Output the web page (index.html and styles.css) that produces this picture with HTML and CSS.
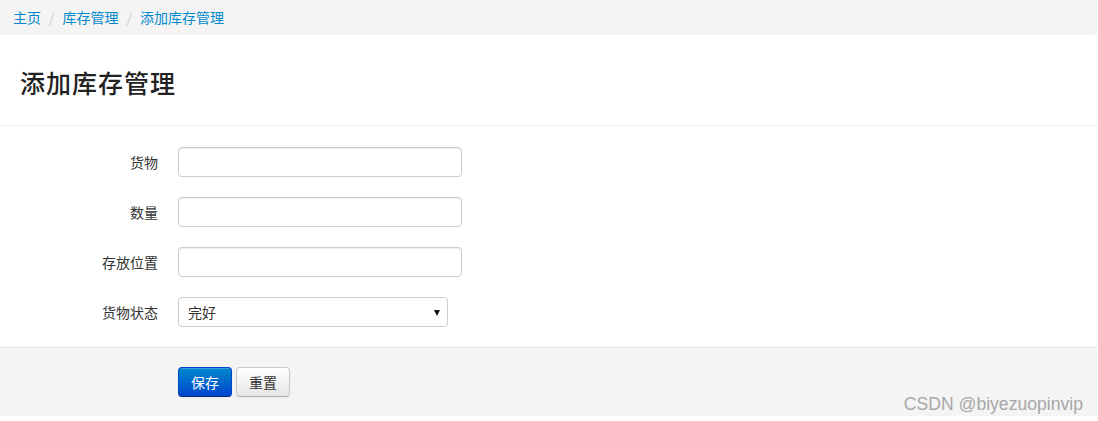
FILE: index.html
```html
<!DOCTYPE html>
<html lang="zh-CN">
<head>
  <meta charset="UTF-8" />
  <title>添加库存管理</title>
  <link rel="stylesheet" href="styles.css">
</head>
<body>
  <div class="page">
    <ul class="breadcrumb">
      <li><a href="#">主页</a><span class="divider">/</span></li>
      <li><a href="#">库存管理</a><span class="divider">/</span></li>
      <li><a href="#">添加库存管理</a></li>
    </ul>

    <div class="page-header">
      <h3>添加库存管理</h3>
    </div>

    <form class="form-horizontal">
      <div class="control-group">
        <label class="control-label">货物</label>
        <div class="controls"><input type="text" class="field" /></div>
      </div>
      <div class="control-group">
        <label class="control-label">数量</label>
        <div class="controls"><input type="text" class="field" /></div>
      </div>
      <div class="control-group">
        <label class="control-label">存放位置</label>
        <div class="controls"><input type="text" class="field" /></div>
      </div>
      <div class="control-group">
        <label class="control-label">货物状态</label>
        <div class="controls">
          <span class="select-wrap">
            <select class="field-select">
              <option>完好</option>
              <option>损坏</option>
            </select>
          </span>
        </div>
      </div>

      <div class="form-actions">
        <button type="button" class="btn btn-primary">保存</button>
        <button type="reset" class="btn">重置</button>
      </div>
    </form>

    <div class="watermark">CSDN @biyezuopinvip</div>
  </div>
</body>
</html>
```

FILE: styles.css
```css
body {
  margin: 0;
  font-family: "Noto Sans CJK SC", "Liberation Sans", sans-serif;
  font-size: 14px;
  color: #333;
  background: #fff;
}

.page {
  position: relative;
  width: 1097px;
}

.breadcrumb {
  list-style: none;
  margin: 0;
  padding: 7px 13px 8px;
  height: 20px;
  line-height: 20px;
  background: #f4f4f4;
  border-radius: 0 0 4px 0;
  display: flex;
}

.breadcrumb a {
  color: #0088cc;
  text-decoration: none;
}

.breadcrumb .divider {
  color: #ccc;
  padding: 0 8px;
}

.page-header {
  height: 90px;
  border-bottom: 1px solid #eee;
  display: flex;
  align-items: center;
  padding-left: 20px;
}

.page-header h3 {
  margin: 4px 0 0;
  font-size: 25px;
  font-weight: 500;
  color: #222;
  letter-spacing: 1px;
}

.form-horizontal {
  padding-top: 21px;
}

.control-group {
  display: flex;
  align-items: center;
  margin-bottom: 20px;
}

.control-label {
  width: 158px;
  text-align: right;
  margin-right: 20px;
  line-height: 30px;
}

.field {
  box-sizing: border-box;
  width: 284px;
  height: 30px;
  border: 1px solid #ccc;
  border-radius: 4px;
  box-shadow: inset 0 1px 1px rgba(0,0,0,0.075);
  padding: 4px 8px;
  font-size: 14px;
  display: block;
}

.select-wrap {
  position: relative;
  display: block;
}

.select-wrap::after {
  content: "";
  position: absolute;
  right: 8px;
  top: 13px;
  border-left: 3px solid transparent;
  border-right: 3px solid transparent;
  border-top: 6px solid #111;
}

.field-select {
  appearance: none;
  -webkit-appearance: none;
  box-sizing: border-box;
  width: 270px;
  height: 30px;
  border: 1px solid #ccc;
  border-radius: 4px;
  background: #fff;
  padding: 0 9px;
  font-family: inherit;
  font-size: 14px;
  color: #333;
  display: block;
}

.form-actions {
  margin-top: 20px;
  border-top: 1px solid #e2e2e2;
  background: #f4f4f4;
  height: 49px;
  padding: 19px 0 0 178px;
  display: flex;
  align-items: flex-start;
  gap: 4px;
}

.btn {
  box-sizing: border-box;
  width: 54px;
  height: 30px;
  padding: 0;
  font-family: inherit;
  font-size: 14px;
  color: #333;
  border: 1px solid #c8c8c8;
  border-bottom-color: #b3b3b3;
  border-radius: 4px;
  background: linear-gradient(#ffffff, #e6e6e6);
  box-shadow: inset 0 1px 0 rgba(255,255,255,0.2), 0 1px 2px rgba(0,0,0,0.05);
  cursor: pointer;
}

.btn-primary {
  color: #fff;
  border-color: #0044cc #0044cc #002a80;
  background: linear-gradient(#0088cc, #0044cc);
}

.watermark {
  position: absolute;
  right: 14px;
  bottom: 1px;
  font-family: "Liberation Sans", sans-serif;
  font-size: 17.6px;
  color: #a8a8a8;
}
```
